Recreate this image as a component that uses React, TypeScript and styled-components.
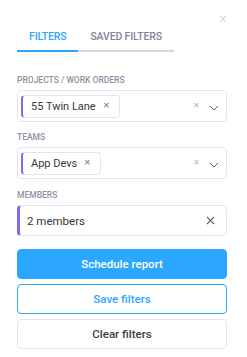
import React from "react";
import styled, { createGlobalStyle } from "styled-components";

const Global = createGlobalStyle`
  html, body { margin: 0; padding: 0; background: #ffffff; }
  body { font-family: Roboto, "Liberation Sans", Arial, sans-serif; }
  * { box-sizing: border-box; }
`;

const Panel = styled.div`
  width: 247px;
  height: 357px;
  padding: 14px 20px 0 17px;
  display: flex;
  flex-direction: column;
`;

const Header = styled.div`
  display: flex;
  justify-content: flex-end;
  height: 9px;
  padding-top: 1px;
`;

const CloseBtn = styled.div`
  width: 8px;
  height: 8px;
  display: flex;
`;

const Tabs = styled.div`
  display: flex;
  margin-top: 5px;
`;

const Tab = styled.div<{ $active?: boolean }>`
  padding: 2px 12px 6px;
  line-height: 14px;
  font-size: 10.5px;
  letter-spacing: -0.15px;
  font-weight: 500;
  color: ${(p) => (p.$active ? "#2ea6ff" : "#7e8796")};
  border-bottom: 2px solid ${(p) => (p.$active ? "#2ea6ff" : "#d3d8e2")};
`;

const Section = styled.div<{ $top: number }>`
  display: flex;
  flex-direction: column;
  gap: 4px;
  margin-top: ${(p) => p.$top}px;
`;

const Label = styled.div`
  font-size: 8.5px;
  line-height: 12px;
  font-weight: 500;
  color: #8a93a3;
  text-transform: uppercase;
`;

const Select = styled.div`
  height: 32px;
  border: 1px solid #e4e7ee;
  border-radius: 4px;
  display: flex;
  align-items: center;
  padding: 0 7px 0 3px;
`;

const Chip = styled.div`
  height: 23px;
  display: flex;
  align-items: center;
  gap: 7px;
  padding: 0 9px 0 8px;
  border: 1px solid #e2e5ec;
  border-left: 2px solid #7d6cf0;
  border-radius: 4px;
  font-size: 11px;
  color: #333840;
`;

const ChipX = styled.span`
  font-size: 8px;
  font-weight: 700;
  color: #8e97a5;
  line-height: 1;
`;

const Spacer = styled.div`
  flex: 1;
`;

const Indicators = styled.div`
  display: flex;
  align-items: center;
  gap: 9px;
`;

const SmallX = styled.span`
  font-size: 8px;
  color: #b0b5bd;
  line-height: 1;
`;

const ChevronWrap = styled.span`
  display: flex;
  margin-top: 4px;
`;

const Members = styled.div`
  height: 31px;
  border: 1px solid #e4e7ee;
  border-left: 3px solid #7d6cf0;
  border-radius: 4px;
  display: flex;
  align-items: center;
  padding: 0 11px 0 7px;
  font-size: 11.5px;
  color: #333840;
`;

const Buttons = styled.div`
  display: flex;
  flex-direction: column;
  gap: 5px;
  margin-top: 13px;
`;

const Button = styled.button<{ $variant: "primary" | "outline" | "plain" }>`
  height: 30px;
  border-radius: 4px;
  font-family: Roboto, "Liberation Sans", Arial, sans-serif;
  font-size: 11.5px;
  font-weight: 500;
  cursor: pointer;
  background: ${(p) => (p.$variant === "primary" ? "#2ba7ff" : "#ffffff")};
  color: ${(p) =>
    p.$variant === "primary" ? "#ffffff" : p.$variant === "outline" ? "#2ba7ff" : "#3a3f47"};
  border: 1px solid
    ${(p) => (p.$variant === "plain" ? "#e4e7ee" : "#2ba7ff")};
`;

const Chevron = () => (
  <ChevronWrap>
    <svg width="10" height="6" viewBox="0 0 10 6" fill="none">
      <path d="M1 1l4 4 4-4" stroke="#5a5f68" strokeWidth="1" />
    </svg>
  </ChevronWrap>
);

const XIcon = ({ size, color, w }: { size: number; color: string; w: number }) => (
  <svg width={size} height={size} viewBox="0 0 10 10" fill="none">
    <path d="M1 1l8 8M9 1l-8 8" stroke={color} strokeWidth={w} />
  </svg>
);

const MultiSelect = ({ value }: { value: string }) => (
  <Select>
    <Chip>
      {value}
      <ChipX>✕</ChipX>
    </Chip>
    <Spacer />
    <Indicators>
      <SmallX>✕</SmallX>
      <Chevron />
    </Indicators>
  </Select>
);

export default function App() {
  return (
    <>
      <Global />
      <Panel>
        <Header>
          <CloseBtn>
            <XIcon size={8} color="#c4c7cc" w={1.2} />
          </CloseBtn>
        </Header>
        <Tabs>
          <Tab $active>FILTERS</Tab>
          <Tab>SAVED FILTERS</Tab>
        </Tabs>
        <Section $top={22}>
          <Label>Projects / Work Orders</Label>
          <MultiSelect value="55 Twin Lane" />
        </Section>
        <Section $top={9}>
          <Label>Teams</Label>
          <MultiSelect value="App Devs" />
        </Section>
        <Section $top={10}>
          <Label>Members</Label>
          <Members>
            2 members
            <Spacer />
            <XIcon size={9} color="#555a62" w={1.3} />
          </Members>
        </Section>
        <Buttons>
          <Button $variant="primary">Schedule report</Button>
          <Button $variant="outline">Save filters</Button>
          <Button $variant="plain">Clear filters</Button>
        </Buttons>
      </Panel>
    </>
  );
}
